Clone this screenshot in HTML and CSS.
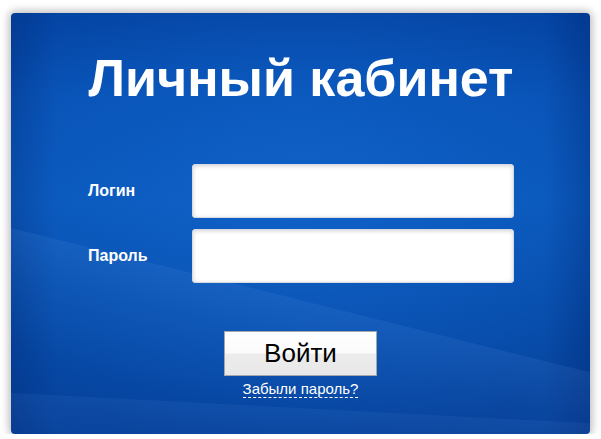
FILE: index.html
```html
<!DOCTYPE html>
<html lang="ru">
<head>
  <meta charset="UTF-8" />
  <title>Личный кабинет</title>
  <link rel="stylesheet" href="styles.css">
</head>
<body>
  <div class="panel">
    <h1>Личный кабинет</h1>
    <form class="login-form">
      <label for="login">Логин</label>
      <input type="text" id="login" name="login">

      <label for="password">Пароль</label>
      <input type="password" id="password" name="password">

      <div class="actions">
        <button type="submit">Войти</button>
        <a href="#" class="forgot">Забыли пароль?</a>
      </div>
    </form>
  </div>
</body>
</html>
```

FILE: styles.css
```css
body {
  margin: 0;
  background: #fff;
  font-family: "Liberation Sans", Arial, sans-serif;
}
.panel {
  position: relative;
  overflow: hidden;
  box-sizing: border-box;
  width: 579px;
  height: 421px;
  margin: 13px 11px 0 11px;
  padding: 35px 76px 0 77px;
  border-radius: 4px;
  background:
    radial-gradient(ellipse 330px 260px at 50% 45%, rgba(20,105,210,0.55), rgba(20,105,210,0) 100%),
    linear-gradient(90deg, rgba(0,30,100,0.25) 0%, rgba(0,30,100,0) 8%, rgba(0,30,100,0) 92%, rgba(0,30,100,0.3) 100%),
    linear-gradient(180deg, #0444a3 0%, #0852b5 20%, #0a58bb 45%, #074ba8 75%, #05409a 100%);
  box-shadow: 0 0 8px 2px rgba(0,0,0,0.28);
}
/* light swooshes */
.panel::before {
  content: "";
  position: absolute;
  left: 0;
  top: 215px;
  width: 579px;
  height: 120px;
  background: linear-gradient(180deg, rgba(130,180,255,0.09) 0%, rgba(130,180,255,0.04) 40%, rgba(130,180,255,0) 100%);
  transform: skewY(14deg);
  transform-origin: left top;
}
.panel::after {
  content: "";
  position: absolute;
  left: 0;
  top: 380px;
  width: 579px;
  height: 60px;
  background: linear-gradient(180deg, rgba(130,180,255,0.07) 0%, rgba(130,180,255,0.02) 100%);
  transform: skewY(3deg);
  transform-origin: left top;
}
h1 {
  position: relative;
  z-index: 1;
  margin: 0;
  font-size: 52px;
  line-height: 60px;
  font-weight: bold;
  color: #fff;
  text-align: center;
}
.login-form {
  position: relative;
  z-index: 1;
  display: grid;
  grid-template-columns: 104px 322px;
  grid-template-rows: 54px 54px auto;
  row-gap: 11px;
  align-items: center;
  margin-top: 56px;
}
label {
  font-size: 16px;
  font-weight: bold;
  color: #fff;
}
input {
  box-sizing: border-box;
  width: 322px;
  height: 54px;
  border: 1px solid #d6dbe3;
  border-radius: 3px;
  background: #fff;
  box-shadow: inset 0 1px 4px rgba(0,0,0,0.18);
  font-size: 18px;
  padding: 0 10px;
}
.actions {
  grid-column: 1 / 3;
  margin-top: 37px;
  margin-left: -77px;
  margin-right: -76px;
  display: flex;
  flex-direction: column;
  align-items: center;
}
button {
  box-sizing: border-box;
  width: 153px;
  height: 45px;
  border: 1px solid #a2a7ad;
  background: linear-gradient(180deg, #ffffff 0%, #fbfbfb 48%, #ececec 52%, #e8e8e8 100%);
  font-family: "Liberation Sans", Arial, sans-serif;
  font-size: 26px;
  color: #000;
  cursor: pointer;
  padding: 0;
}
.forgot {
  margin-top: 5px;
  font-size: 15px;
  color: #fff;
  text-decoration: none;
  border-bottom: 1px dashed #fff;
  line-height: 16px;
}
```
